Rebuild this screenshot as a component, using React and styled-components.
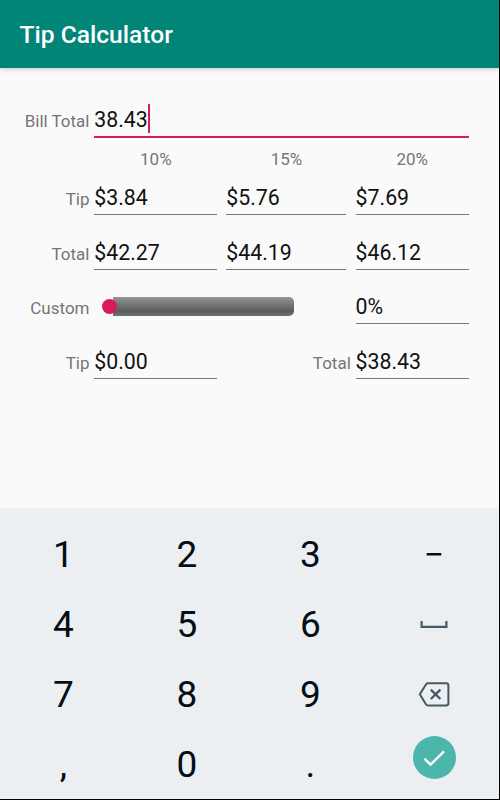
import React, { useState } from "react";
import styled, { createGlobalStyle } from "styled-components";

const GlobalStyle = createGlobalStyle`
  * {
    box-sizing: border-box;
  }
  body {
    margin: 0;
    background-color: #000;
    font-family: Roboto, "Liberation Sans", sans-serif;
  }
`;

const money = (value) => "$" + value.toFixed(2);

const App = () => {
  const [bill, setBill] = useState("38.43");
  const [custom] = useState(0);

  const amount = parseFloat(bill) || 0;
  const rates = [10, 15, 20];
  const customTip = (amount * custom) / 100;

  const press = (key) => setBill((bill) => bill + key);
  const erase = () => setBill((bill) => bill.slice(0, -1));

  return (
    <Screen>
      <GlobalStyle />
      <Header>
        <Title>Tip Calculator</Title>
      </Header>

      <Form>
        <Label>Bill Total</Label>
        <BillField>
          {bill}
          <Cursor />
        </BillField>

        {rates.map((rate, i) => (
          <Percent key={rate} $first={i === 0} $last={i === 2}>{rate}%</Percent>
        ))}

        <Label>Tip</Label>
        {rates.map((rate, i) => (
          <Field key={rate} $last={i === 2}>{money((amount * rate) / 100)}</Field>
        ))}

        <Label>Total</Label>
        {rates.map((rate, i) => (
          <Field key={rate} $last={i === 2}>{money(amount + Math.round(amount * rate) / 100)}</Field>
        ))}

        <Label>Custom</Label>
        <Slider>
          <Thumb />
          <Track />
        </Slider>
        <Field $last>{custom}%</Field>

        <Label>Tip</Label>
        <Field>{money(customTip)}</Field>
        <Label>Total</Label>
        <Field $last>{money(amount + customTip)}</Field>
      </Form>

      <Keypad>
        <Key onClick={() => press("1")}>1</Key>
        <Key onClick={() => press("2")}>2</Key>
        <Key onClick={() => press("3")}>3</Key>
        <Key>
          <svg width="16" height="4" viewBox="0 0 16 4">
            <path d="M0.7 1.2H15.3" stroke="#070d14" strokeWidth="2.6" />
          </svg>
        </Key>
        <Key onClick={() => press("4")}>4</Key>
        <Key onClick={() => press("5")}>5</Key>
        <Key onClick={() => press("6")}>6</Key>
        <Key>
          <svg width="28" height="8" viewBox="0 0 28 8" fill="none">
            <path d="M1.6 0V5.8H26.4V0" stroke="#455a64" strokeWidth="2.2" />
          </svg>
        </Key>
        <Key onClick={() => press("7")}>7</Key>
        <Key onClick={() => press("8")}>8</Key>
        <Key onClick={() => press("9")}>9</Key>
        <Key onClick={erase}>
          <svg width="32" height="26" viewBox="0 0 32 26" fill="none" stroke="#455a64" strokeWidth="2">
            <path d="M9.8 1.2H28.2Q30.4 1.2 30.4 3.4V21.2Q30.4 23.4 28.2 23.4H9.8Q8.7 23.4 8.1 22.4L1.8 12.3L8.1 2.2Q8.7 1.2 9.8 1.2Z" />
            <path d="M12.8 7.7L22.4 17M22.4 7.7L12.8 17" strokeWidth="2.3" />
          </svg>
        </Key>
        <Key onClick={() => press(",")}>,</Key>
        <Key onClick={() => press("0")}>0</Key>
        <Key onClick={() => press(".")}>.</Key>
        <Key>
          <Done>
            <svg width="24" height="18" viewBox="0 0 24 18" fill="none">
              <path d="M2.4 9.7L8.6 15.6L22 2.4" stroke="#fff" strokeWidth="2.4" />
            </svg>
          </Done>
        </Key>
      </Keypad>
    </Screen>
  );
};

const Screen = styled.div`
  width: 499px;
  height: 799px;
  display: flex;
  flex-direction: column;
  background-color: #fafafa;
  overflow: hidden;
`;
const Header = styled.header`
  height: 68px;
  flex-shrink: 0;
  padding: 0 19.5px;
  display: flex;
  align-items: center;
  background-color: #008577;
  box-shadow: 0 1px 5px rgba(0, 0, 0, 0.2);
`;
const Title = styled.h1`
  margin: 0;
  font-size: 24.6px;
  font-weight: 500;
  color: #fff;
`;
const Form = styled.main`
  flex: 1;
  padding-top: 25px;
  display: grid;
  grid-template-columns: 94.3px 132px 129.3px 113.4px;
  grid-template-rows: 45px 33.1px repeat(4, 54.5px);
  align-items: baseline;
`;
const Label = styled.label`
  padding: 14px 4.8px 0 0;
  font-size: 17px;
  line-height: 25px;
  text-align: right;
  color: #757575;
`;
const Field = styled.output`
  display: block;
  margin-right: ${p => p.$last ? "0" : "9.5px"};
  padding: 14.4px 0 3.6px;
  font-size: 21.3px;
  line-height: 25px;
  color: #111;
  border-bottom: 1px solid #777;
`;
const BillField = styled.div`
  grid-column: span 3;
  display: flex;
  padding: 14px 0 4px;
  font-size: 21.3px;
  line-height: 25px;
  color: #111;
  border-bottom: 2px solid #d81b60;
`;
const Cursor = styled.span`
  width: 2px;
  height: 29px;
  margin: -3px 0 -1px -0.3px;
  background-color: #d81b60;
`;
const Percent = styled.span`
  grid-column: ${p => p.$first ? "2" : "auto"};
  margin-right: ${p => p.$last ? "0" : "9px"};
  padding-top: 10px;
  font-size: 17px;
  line-height: 22px;
  text-align: center;
  color: #757575;
`;
const Slider = styled.div`
  grid-column: span 2;
  align-self: start;
  height: 54.5px;
  padding: 0 61.5px 1.4px 7.5px;
  display: flex;
  align-items: center;
`;
const Thumb = styled.span`
  z-index: 1;
  width: 15px;
  height: 15px;
  margin-right: -4px;
  flex-shrink: 0;
  border-radius: 50%;
  background-color: #d81b60;
`;
const Track = styled.span`
  flex: 1;
  height: 19px;
  border-radius: 0 5px 5px 0;
  background: linear-gradient(#949694, #5a5d5a 75%, #707270);
`;
const Keypad = styled.section`
  height: 290px;
  flex-shrink: 0;
  padding: 11px 1.5px 0;
  display: grid;
  grid-template-columns: repeat(4, 123.6px);
  grid-template-rows: repeat(4, 70px);
  background-color: #eceff1;
  box-shadow: 0 -1px 2px rgba(0, 0, 0, 0.05);
`;
const Key = styled.button`
  padding: 0;
  display: flex;
  align-items: center;
  justify-content: center;
  border: none;
  background: none;
  font-family: inherit;
  font-size: 37px;
  line-height: 44px;
  color: #070d14;
`;
const Done = styled.span`
  width: 43px;
  height: 43px;
  margin-bottom: 15px;
  display: flex;
  align-items: center;
  justify-content: center;
  border-radius: 50%;
  background-color: #4db6ac;
`;

export default App;
